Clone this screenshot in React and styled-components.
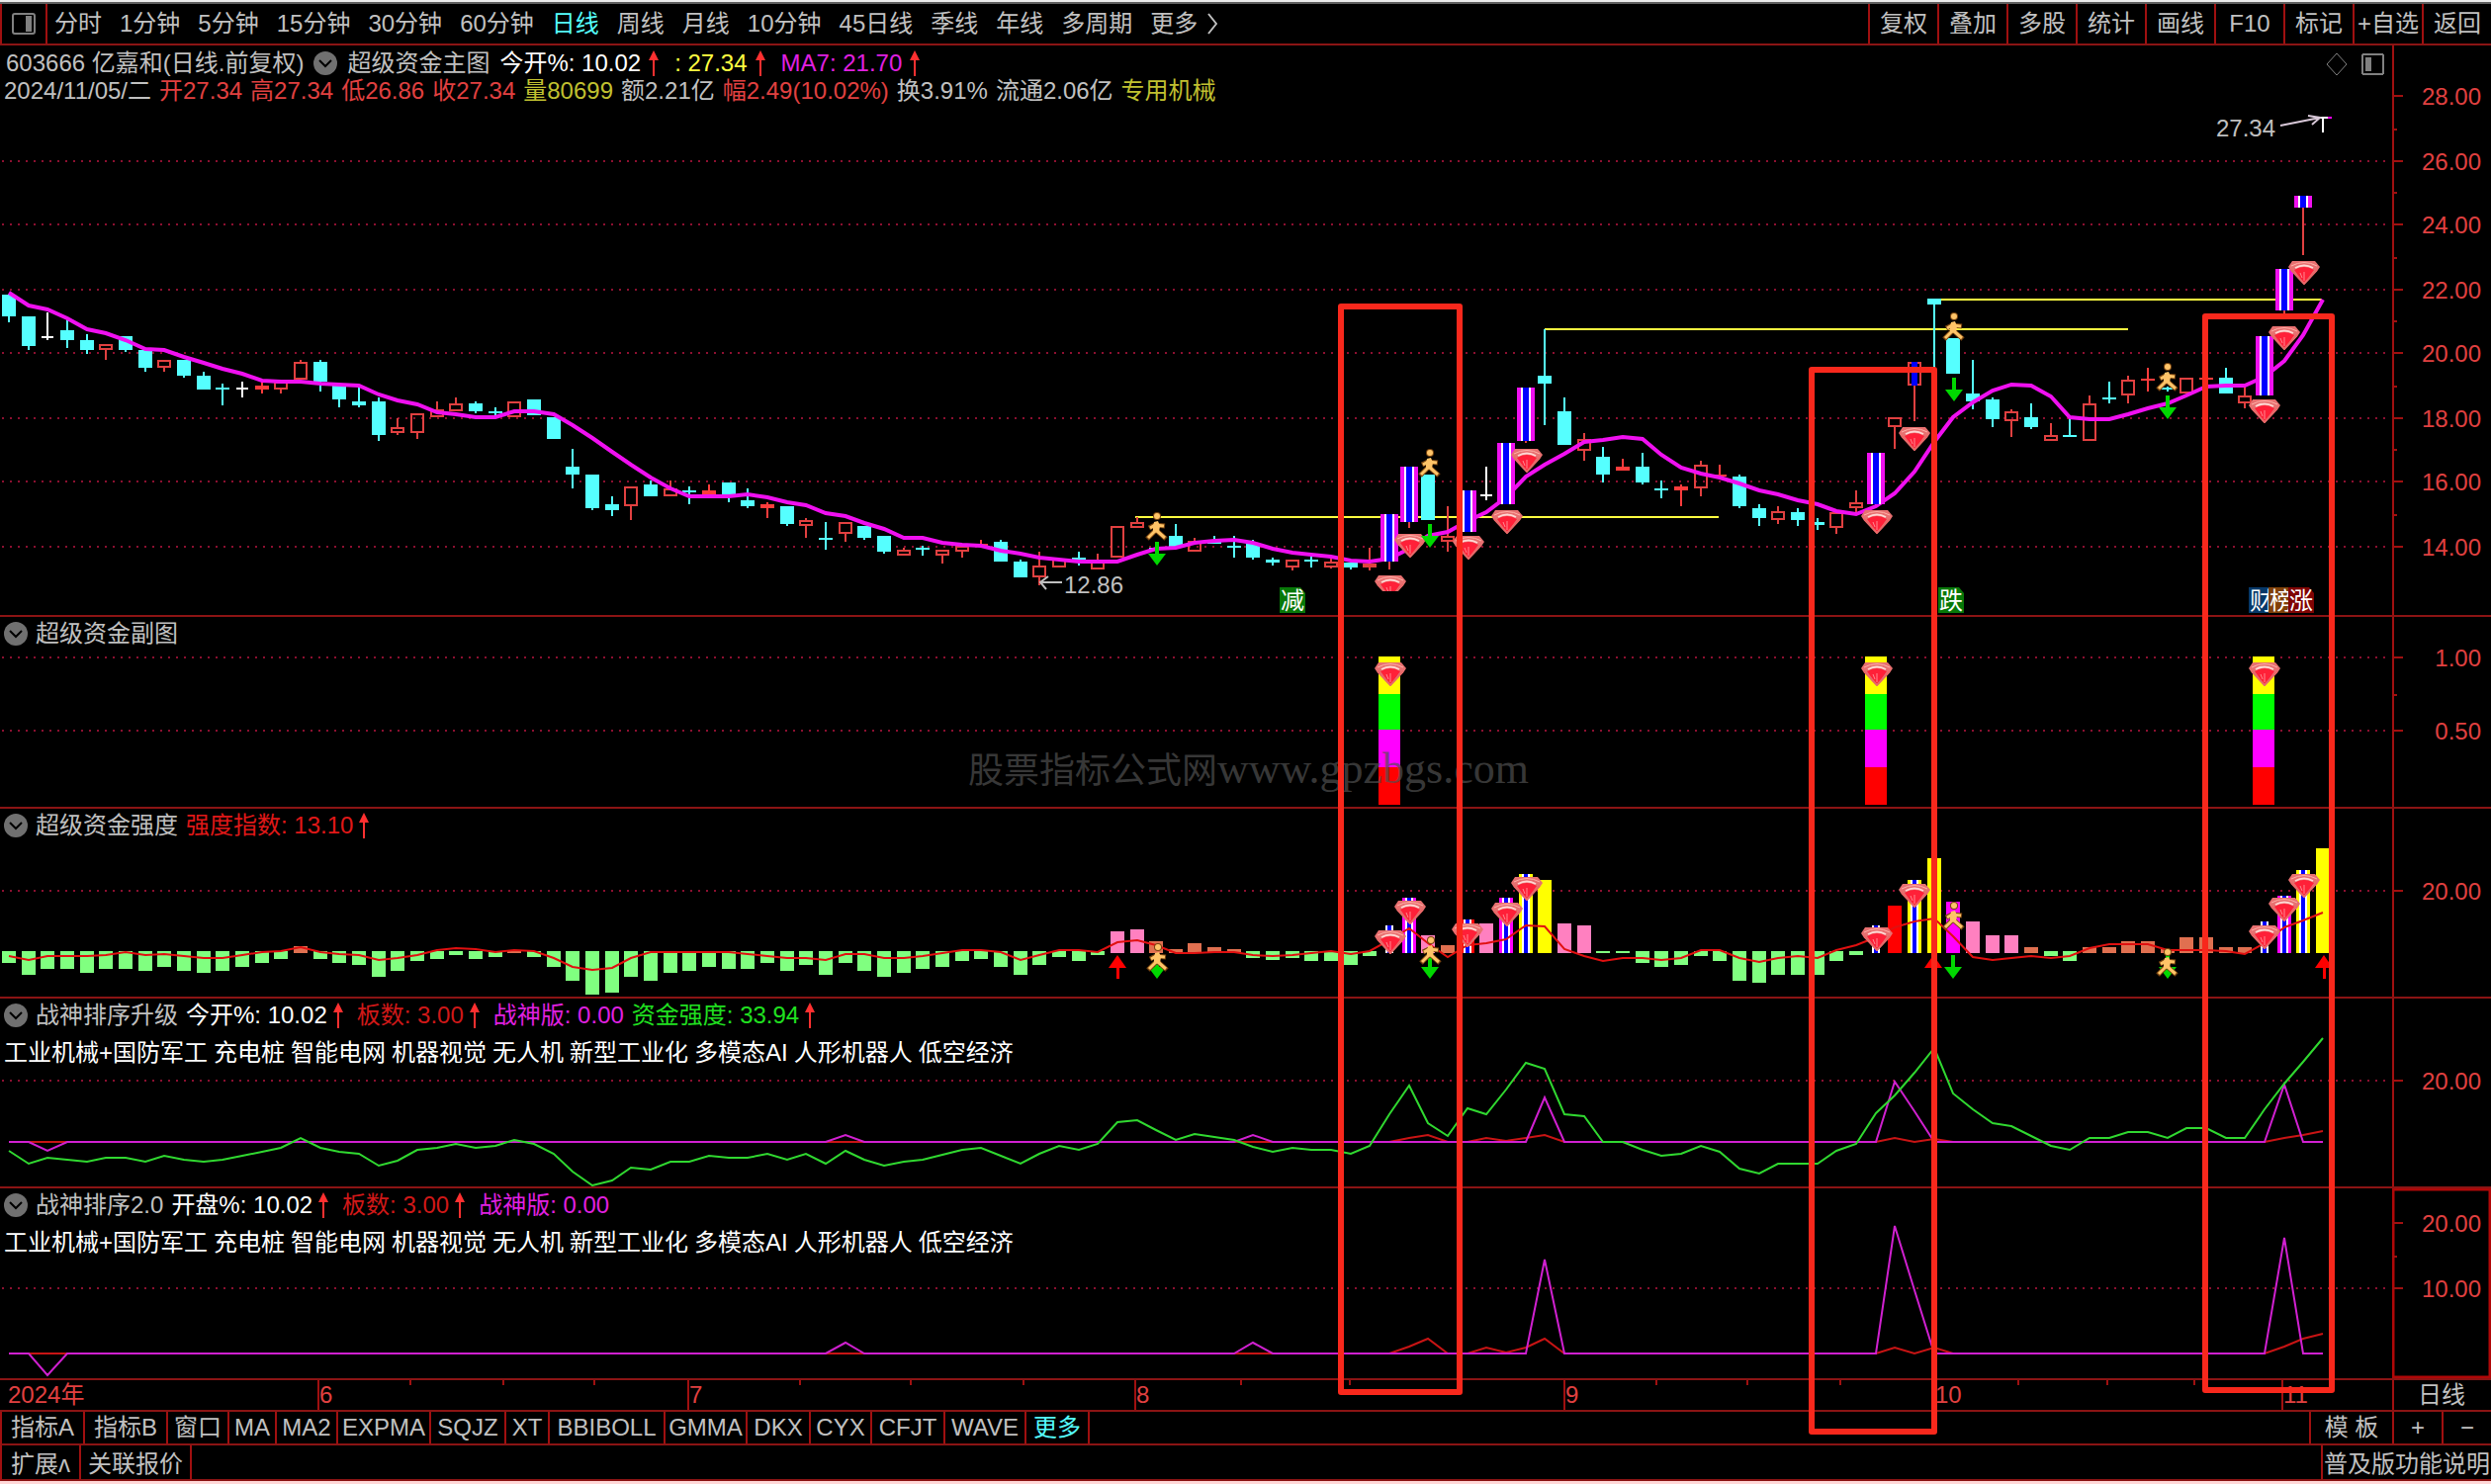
import React from "react";
import styled, { createGlobalStyle, css } from "styled-components";

const GlobalStyle = createGlobalStyle`
  * {
    box-sizing: border-box;
  }
  body {
    margin: 0;
    background: #000;
    font-family: "Liberation Sans", "Noto Sans CJK SC", sans-serif;
    font-size: 24px;
    line-height: 28px;
    color: #c0c0c0;
  }
  button {
    font: inherit;
    color: inherit;
    background: none;
    border: none;
    padding: 0;
    cursor: pointer;
    white-space: nowrap;
  }
`;

const RED = "#e04040";
const LINE = "#8b1414";
const MAGENTA = "#f010f0";
const CYAN = "#55ffff";

/* ---------- data ---------- */

const periods = [
  "分时", "1分钟", "5分钟", "15分钟", "30分钟", "60分钟", "日线", "周线",
  "月线", "10分钟", "45日线", "季线", "年线", "多周期", "更多",
];
const tools = ["复权", "叠加", "多股", "统计", "画线", "F10", "标记", "+自选", "返回"];

const quote = [
  ["2024/11/05/二", "#c0c0c0"],
  ["开27.34", RED],
  ["高27.34", RED],
  ["低26.86", RED],
  ["收27.34", RED],
  ["量80699", "#c0c030"],
  ["额2.21亿", "#c0c0c0"],
  ["幅2.49(10.02%)", RED],
  ["换3.91%", "#c0c0c0"],
  ["流通2.06亿", "#c0c0c0"],
  ["专用机械", "#c0c030"],
];

const concepts = [
  "工业机械+国防军工", "充电桩", "智能电网", "机器视觉", "无人机",
  "新型工业化", "多模态AI", "人形机器人", "低空经济",
];

const indicatorTabs = [
  ["指标A", 84], ["指标B", 84], ["窗口", 62], ["MA", 48], ["MA2", 62], ["EXPMA", 94],
  ["SQJZ", 76], ["XT", 44], ["BBIBOLL", 117], ["GMMA", 83], ["DKX", 64], ["CYX", 62],
  ["CFJT", 74], ["WAVE", 82], ["更多", 64],
];

// [kind, high, bodyTop, bodyBottom, low]
// C falling, R rising, F rising solid, W flat, S limit-up stripes, B blue core
const candles = [
  ["C", 298, 298, 320, 326], ["C", 320, 320, 350, 354], ["W", 316, 340, 342, 344],
  ["C", 323, 334, 344, 352], ["C", 338, 344, 354, 358], ["R", 348, 348, 354, 364],
  ["C", 340, 340, 354, 356], ["C", 354, 354, 372, 376], ["R", 364, 364, 372, 376],
  ["C", 364, 364, 380, 382], ["C", 376, 380, 394, 394], ["C", 388, 392, 394, 410],
  ["W", 386, 392, 394, 402], ["F", 386, 390, 394, 398], ["R", 386, 386, 394, 398],
  ["R", 364, 366, 384, 384], ["C", 364, 366, 386, 396], ["C", 390, 390, 404, 412],
  ["C", 392, 406, 410, 412], ["C", 402, 406, 440, 446], ["R", 423, 432, 438, 440],
  ["R", 418, 418, 438, 444], ["R", 406, 414, 422, 422], ["R", 402, 408, 416, 416],
  ["C", 406, 408, 416, 418], ["C", 412, 416, 418, 420], ["R", 406, 406, 422, 422],
  ["C", 404, 404, 420, 420], ["C", 422, 422, 444, 444], ["C", 454, 472, 480, 494],
  ["C", 480, 480, 514, 516], ["C", 502, 510, 516, 522], ["R", 492, 492, 512, 526],
  ["C", 486, 490, 502, 502], ["R", 486, 494, 502, 502], ["C", 492, 496, 498, 510],
  ["F", 490, 496, 502, 502], ["C", 488, 488, 502, 508], ["C", 494, 506, 512, 514],
  ["F", 508, 510, 514, 524], ["C", 512, 512, 530, 532], ["R", 524, 526, 532, 544],
  ["C", 528, 544, 546, 556], ["R", 528, 528, 540, 548], ["C", 532, 532, 544, 546],
  ["C", 542, 542, 558, 560], ["R", 554, 556, 562, 562], ["C", 552, 554, 556, 562],
  ["R", 556, 556, 562, 570], ["R", 552, 552, 558, 564], ["F", 546, 550, 552, 553],
  ["C", 546, 548, 568, 568], ["C", 566, 568, 584, 584], ["R", 558, 572, 584, 592],
  ["R", 565, 565, 574, 574], ["C", 558, 564, 566, 572], ["R", 560, 568, 576, 576],
  ["R", 532, 532, 564, 564], ["R", 523, 528, 534, 534], ["C", 554, 554, 556, 556],
  ["C", 530, 542, 554, 554], ["R", 544, 547, 558, 558], ["C", 542, 546, 550, 550],
  ["C", 542, 552, 554, 564], ["C", 546, 550, 564, 566],
  ["C", 564, 566, 569, 572], ["R", 566, 566, 574, 577], ["C", 563, 566, 568, 574],
  ["R", 565, 568, 574, 575], ["C", 569, 569, 574, 576], ["R", 554, 570, 574, 577],
  ["S", 520, 520, 568, 576], ["S", 472, 472, 528, 534], ["C", 480, 480, 526, 526],
  ["R", 512, 542, 548, 558], ["S", 496, 496, 538, 538], ["W", 472, 500, 502, 506],
  ["S", 448, 448, 510, 510], ["S", 392, 392, 446, 448], ["C", 333, 380, 388, 430],
  ["C", 402, 416, 450, 450], ["R", 438, 444, 456, 466], ["C", 452, 462, 480, 488],
  ["F", 464, 472, 476, 476], ["C", 458, 472, 488, 490], ["C", 486, 494, 496, 504],
  ["F", 490, 492, 496, 512], ["R", 466, 470, 494, 502], ["F", 470, 480, 482, 484],
  ["C", 480, 482, 512, 514], ["C", 510, 514, 524, 532], ["R", 512, 517, 526, 530],
  ["C", 514, 518, 526, 532], ["C", 524, 528, 531, 536], ["R", 518, 518, 534, 540],
  ["R", 496, 508, 514, 518], ["S", 458, 458, 510, 510], ["R", 422, 422, 432, 454],
  ["B", 366, 366, 390, 426], ["C", 302, 302, 308, 375], ["C", 342, 342, 378, 378],
  ["C", 364, 398, 406, 414], ["C", 402, 404, 424, 432], ["R", 414, 416, 426, 442],
  ["C", 408, 422, 432, 434], ["R", 428, 440, 446, 446], ["C", 424, 440, 442, 442],
  ["R", 400, 408, 446, 446], ["C", 386, 402, 404, 408], ["R", 380, 384, 400, 408],
  ["F", 372, 383, 385, 396], ["C", 391, 392, 394, 396], ["R", 382, 382, 398, 398],
  ["F", 382, 382, 384, 384], ["C", 372, 382, 398, 398], ["R", 391, 400, 408, 413],
  ["S", 340, 340, 400, 400], ["S", 272, 272, 314, 323], ["S", 198, 198, 210, 258],
  ["W", 118, 118, 120, 134],
];

const ma7 = [
  296, 309, 313, 322, 333, 337, 344, 353, 354, 361, 367, 373, 378, 385, 386, 386, 388, 389, 390,
  399, 405, 409, 417, 419, 422, 422, 416, 416, 419, 430, 443, 457, 470, 483, 494, 502, 502, 502,
  500, 503, 508, 511, 519, 522, 529, 535, 544, 544, 549, 551, 552, 557, 560, 564, 566, 568, 568,
  568, 561, 555, 554, 549, 547, 546, 549, 555, 559, 561, 563, 567, 568, 565, 555, 542, 538, 527,
  518, 503, 482, 470, 459, 447, 445, 442, 444, 460, 473, 479, 483, 489, 496, 500, 506, 510, 517,
  520, 512, 499, 477, 447, 422, 407, 395, 389, 390, 401, 422, 424, 424, 419, 413, 408, 400, 391,
  390, 390, 381, 365, 339, 303,
];

// top or bottom edge of each strength bar
const strength = [
  974, 986, 980, 980, 984, 980, 980, 982, 978, 982, 984, 982, 978, 974, 970, "o957", 970, 974,
  976, 988, 982, 972, 970, 966, 970, 968, "o962", 968, 978, 992, 1006, 1004, 988, 992, 984, 982,
  978, 980, 980, 974, 982, 976, 986, 974, 982, 988, 984, 980, 978, 972, 970, 978, 986, 976, 968,
  972, 966, "p942", "p940", "o952", "o960", "o954", "o958", "o960", 969, 971, 969, 972, 972, 976,
  967, "b936", "m908", "p946", "o956", "n930", "p934", "m908", "z884", "y890", "p934", "p936",
  964, 964, 974, 978, 976, 967, 972, 992, 994, 986, 986, 986, 972, 966, "b936", "r916", "z890",
  "y868", "v912", "p932", "p946", "p946", "o958", 967, 972, "o958", "o958", "o952", "o952",
  "o960", "o948", "o948", "o958", "o958", "b932", "m906", "z880", "y858",
];

const strengthMa = [
  967, 971, 967, 967, 967, 966, 963, 966, 965, 967, 969, 969, 966, 963, 962, 958, 963, 965, 966,
  971, 969, 966, 961, 959, 960, 963, 961, 962, 969, 978, 981, 979, 969, 963, 963, 963, 963, 963,
  965, 967, 969, 969, 971, 965, 965, 969, 969, 967, 964, 961, 961, 963, 971, 966, 961, 961, 963,
  953, 951, 956, 964, 964, 963, 963, 966, 967, 966, 964, 962, 965, 962, 951, 939, 954, 968, 956,
  954, 950, 936, 937, 960, 967, 972, 969, 969, 971, 969, 961, 961, 969, 973, 969, 967, 969, 961,
  956, 948, 938, 932, 929, 947, 968, 971, 969, 967, 969, 967, 959, 955, 955, 955, 961, 961, 961,
  962, 965, 954, 938, 931, 923,
];

const fund = [
  1164, 1177, 1171, 1173, 1175, 1171, 1171, 1175, 1169, 1173, 1175, 1173, 1169, 1165, 1161, 1151,
  1161, 1165, 1167, 1179, 1174, 1163, 1161, 1157, 1161, 1159, 1153, 1157, 1167, 1185, 1199, 1194,
  1181, 1183, 1175, 1175, 1169, 1171, 1171, 1167, 1173, 1167, 1177, 1164, 1173, 1179, 1175, 1173,
  1168, 1163, 1161, 1169, 1177, 1167, 1159, 1163, 1157, 1135, 1133, 1143, 1153, 1147, 1150, 1153,
  1160, 1165, 1161, 1163, 1163, 1167, 1159, 1127, 1098, 1136, 1149, 1121, 1127, 1102, 1075, 1081,
  1127, 1129, 1155, 1155, 1163, 1169, 1167, 1159, 1165, 1182, 1187, 1177, 1177, 1177, 1164, 1157,
  1126, 1108, 1085, 1060, 1106, 1122, 1136, 1139, 1149, 1159, 1163, 1151, 1151, 1145, 1145, 1151,
  1141, 1141, 1151, 1151, 1122, 1096, 1074, 1050,
];

const spikes4 = { 2: 1164, 43: 1148, 64: 1148, 79: 1110, 97: 1094, 98: 1124, 117: 1097 };
const boards4 = { 72: 1151, 73: 1148, 76: 1151, 77: 1154, 78: 1151, 79: 1148, 97: 1151, 99: 1152, 117: 1151, 118: 1148, 119: 1144 };
const spikes5 = { 2: 1391, 43: 1358, 64: 1358, 79: 1274, 97: 1240, 98: 1305, 117: 1252 };
const boards5 = { 72: 1362, 73: 1354, 76: 1363, 77: 1368, 78: 1363, 79: 1354, 97: 1363, 99: 1363, 117: 1362, 118: 1354, 119: 1349 };

const months = [
  { label: "2024年", span: 321 },
  { label: "6", span: 374 },
  { label: "7", span: 452 },
  { label: "8", span: 434 },
  { label: "9", span: 374 },
  { label: "10", span: 352 },
  { label: "11", span: 112 },
];
const weekTicks = [415, 509, 601, 809, 921, 1035, 1255, 1365, 1675, 1767, 1861, 2041, 2131, 2219];

/* ---------- chart helpers ---------- */

const xAt = (i) => Math.round(9 + (i * 2340) / 119);
const toPoints = (values) => values.map((v, i) => `${xAt(i)},${v}`).join(" ");
const withBase = (base, peaks) =>
  Array.from({ length: 120 }, (_, i) => (i in peaks ? peaks[i] : base));

const Stripes = ({ x, top, bottom, outer = MAGENTA, width = 18, side = 4 }) => {
  const h = bottom - top;
  const inner = width - side * 2;
  return (
    <>
      <rect x={x - width / 2} y={top} width={width} height={h} fill={outer} />
      <rect x={x - inner / 2} y={top} width={inner} height={h} fill="#fff" />
      <rect x={x - inner / 2 + 2} y={top} width={inner - 4} height={h} fill="#0000ff" />
    </>
  );
};

const Candle = ({ kind, x, high, top, bottom, low }) => {
  const h = bottom - top;
  const color = kind === "C" ? CYAN : kind === "W" ? "#fff" : kind === "F" ? "#ff3c3c" : RED;
  const hollow = kind === "R" || kind === "B";
  return (
    <>
      {high < top && <rect x={x - 1} y={high} width="2" height={top - high} fill={color} />}
      {low > bottom && <rect x={x - 1} y={bottom} width="2" height={low - bottom} fill={color} />}
      {kind === "S" && <Stripes x={x} top={top} bottom={bottom} />}
      {hollow && (
        <rect x={x - 6} y={top + 1} width="12" height={h - 2} fill="none" stroke={color} strokeWidth="2" />
      )}
      {kind === "B" && <rect x={x - 3} y={top} width="6" height={h} fill="#0000ff" />}
      {"CFW".includes(kind) && (
        <rect x={x - (kind === "W" ? 6 : 7)} y={top} width={kind === "W" ? 12 : 14} height={h} fill={color} />
      )}
    </>
  );
};

const Gem = ({ x, y, clip }) => (
  <svg x={x - 15} y={y} width="32" height={clip || 24} viewBox={`0 0 32 ${clip || 24}`}>
    <path d="M4 0H27L32 6L30 9L16 24L2 9L0 6Z" fill="#e87070" />
    <path d="M3 5Q16 -2 29 5" fill="none" stroke="#ffb0a8" strokeWidth="1" />
    <path d="M6 9Q16 3 26 9L16 23Z" fill="#ff2038" />
    <path d="M7 7Q16 2 25 7" fill="none" stroke="#ffd8d4" strokeWidth="2" />
    <path d="M3 9L16 23L29 9" fill="none" stroke="#e86868" strokeWidth="2" />
    <path d="M16 11V20M12 12L14 17" stroke="#ff8890" strokeWidth="1" />
  </svg>
);

const Runner = ({ x, y }) => (
  <svg x={x - 11} y={y} width="24" height="30" viewBox="0 0 24 30">
    <path
      d="M10 19L2 27M12 19L21 27M4 16L10 13L20 14"
      fill="none"
      stroke="#7a4510"
      strokeWidth="5"
    />
    <circle cx="12" cy="4" r="4" fill="#7a4510" />
    <circle cx="12" cy="4" r="3" fill="#ffc468" />
    <path d="M9 10L13 9L15 14L14 20L8 21L8 15Z" fill="#ffc468" />
    <path
      d="M10 19L3 26M12 19L20 26M5 16L10 13L19 14"
      fill="none"
      stroke="#ffc468"
      strokeWidth="3"
    />
  </svg>
);

const DownArrow = ({ x, y, h = 24 }) => (
  <g fill="#00d800">
    <rect x={x - 2} y={y} width="4" height={h - 10} />
    <path d={`M${x - 9} ${y + h - 12}H${x + 9}L${x} ${y + h}Z`} />
  </g>
);

const UpArrow = ({ x, y }) => (
  <g fill="#ff0000">
    <rect x={x - 1} y={y + 10} width="3" height="14" />
    <path d={`M${x - 9} ${y + 13}H${x + 9}L${x} ${y}Z`} />
  </g>
);

const Grid = ({ rows }) =>
  rows.map((y) => (
    <line key={y} x1="2" x2="2416" y1={y} y2={y} stroke="#8c1030" strokeWidth="2" strokeDasharray="2 6" />
  ));

const Plot = ({ top, height, children }) => (
  <PlotSvg viewBox={`0 ${top} 2419 ${height}`} preserveAspectRatio="none" $height={height}>
    {children}
  </PlotSvg>
);

const Axis = ({ top, height, labels, minor = [], framed }) => (
  <AxisSvg viewBox={`0 ${top} 100 ${height}`} preserveAspectRatio="xMaxYMin slice" $height={height}>
    <rect x="0" y={top} width="2" height={height} fill="#a01010" />
    {framed && (
      <rect x="1" y={top + 1} width="98" height={height - 2} fill="none" stroke="#b00808" strokeWidth="3" />
    )}
    {labels.map(([y, text]) => (
      <g key={text}>
        <rect x="0" y={y - 1} width="11" height="2" fill="#a01010" />
        <text x="90" y={y + 9} textAnchor="end" fill={RED}>
          {text}
        </text>
      </g>
    ))}
    {minor.map((y) => (
      <rect key={y} x="0" y={y - 1} width="5" height="2" fill="#a01010" />
    ))}
  </AxisSvg>
);

const Badge = ({ x, fill, children }) => (
  <g>
    <path d={`M${x} 594H${x + 21}L${x + 26} 600V620H${x}Z`} fill={fill} />
    <text x={x + 1} y="616" fill="#fff">
      {children}
    </text>
  </g>
);

const Rise = () => (
  <RiseIcon width="10" height="26" viewBox="0 0 10 26" aria-hidden="true">
    <path d="M5 0L10 10H0Z" fill="#ff3030" />
    <path d="M5 6V26" stroke="#ff3030" strokeWidth="2" />
  </RiseIcon>
);

const Toggle = ({ label }) => (
  <ToggleButton aria-label={label}>
    <svg width="24" height="24" viewBox="0 0 24 24">
      <circle cx="12" cy="12" r="12" fill="#707070" />
      <path d="M6 9L12 15L18 9" fill="none" stroke="#000" strokeWidth="2" />
    </svg>
  </ToggleButton>
);

const Value = ({ color, rise, children }) => (
  <>
    <Item $color={color}>{children}</Item>
    {rise && <Rise />}
  </>
);

const Concepts = () => (
  <LegendRow $gap={6}>
    {concepts.map((c) => (
      <Item key={c} $color="#fff">{c}</Item>
    ))}
  </LegendRow>
);

const barColors = { o: "#e07050", p: "#ff80c0", r: "#ff0000", y: "#ffff00", v: "#ff00ff" };
const stripeColors = { b: "#000", n: "#ff0000", m: "#ff00ff", z: "#ffff00" };

const StrengthBar = ({ x, value }) => {
  if (typeof value === "number") {
    return <rect x={x - 7} y="962" width="14" height={value - 962} fill="#80ff80" />;
  }
  const kind = value[0];
  const top = Number(value.slice(1));
  if (stripeColors[kind]) {
    return <Stripes x={x} top={top} bottom={964} outer={stripeColors[kind]} width={14} side={3} />;
  }
  return <rect x={x - 7} y={top} width="14" height={964 - top} fill={barColors[kind]} />;
};

/* ---------- page ---------- */

export default function App() {
  return (
    <>
      <GlobalStyle />
      <Screen>
        <WindowEdge />
        <Toolbar>
          <SideButton aria-label="侧栏">
            <svg width="24" height="22" viewBox="0 0 24 22">
              <rect x="1" y="1" width="22" height="20" rx="2" fill="none" stroke="#808080" strokeWidth="2" />
              <rect x="14" y="3" width="6" height="16" fill="#808080" />
            </svg>
          </SideButton>
          <Periods>
            {periods.map((p) => (
              <PeriodButton key={p} $active={p === "日线"}>
                {p}
              </PeriodButton>
            ))}
            <svg width="10" height="22" viewBox="0 0 10 22">
              <path d="M1 1L9 11L1 21" fill="none" stroke="#c0c0c0" strokeWidth="2" />
            </svg>
          </Periods>
          <Tools>
            {tools.map((t) => (
              <ToolButton key={t}>{t}</ToolButton>
            ))}
          </Tools>
        </Toolbar>

        <Pane>
          <Plot top={46} height={576}>
            <Grid rows={[163, 227, 293, 357, 423, 487, 553]} />
            <g fill="#ffff40">
              <rect x="1148" y="522" width="590" height="2" />
              <rect x="1562" y="332" width="590" height="2" />
              <rect x="1955" y="302" width="393" height="2" />
            </g>
            {candles.map(([kind, high, top, bottom, low], i) =>
              kind === "S" ? null : (
                <Candle key={i} kind={kind} x={xAt(i)} high={high} top={top} bottom={bottom} low={low} />
              )
            )}
            <polyline points={toPoints(ma7)} fill="none" stroke={MAGENTA} strokeWidth="4" />
            {candles.map(([kind, high, top, bottom, low], i) =>
              kind === "S" ? (
                <Candle key={i} kind={kind} x={xAt(i)} high={high} top={top} bottom={bottom} low={low} />
              ) : null
            )}
            <Gem x={1405} y={582} clip={16} />
            <Gem x={1425} y={540} />
            <Gem x={1484} y={542} />
            <Gem x={1523} y={516} />
            <Gem x={1543} y={454} />
            <Gem x={1897} y={516} />
            <Gem x={1935} y={432} />
            <Gem x={2289} y={404} />
            <Gem x={2309} y={330} />
            <Gem x={2329} y={264} />
            <Runner x={1169} y={518} />
            <Runner x={1445} y={454} />
            <Runner x={1975} y={316} />
            <Runner x={2191} y={367} />
            <DownArrow x={1170} y={548} />
            <DownArrow x={1446} y={530} />
            <DownArrow x={1976} y={382} />
            <DownArrow x={2192} y={400} />
            <path d="M1074 589H1053M1060 583L1052 589L1058 596" fill="none" stroke="#c0c0c0" strokeWidth="2" />
            <text x="1076" y="600" fill="#c0c0c0">12.86</text>
            <path d="M2306 127L2346 119M2334 117L2346 119L2338 126" fill="none" stroke="#d8c8d8" strokeWidth="2" />
            <rect x="2354" y="118" width="4" height="2" fill="#ff00ff" />
            <text x="2241" y="138" fill="#c0c0c0">27.34</text>
            <Badge x={1294} fill="#087808">减</Badge>
            <Badge x={1960} fill="#087808">跌</Badge>
            <Badge x={2274} fill="#063868">财</Badge>
            <Badge x={2294} fill="#804008">榜</Badge>
            <Badge x={2314} fill="#800404">涨</Badge>
            <path d="M2363 54L2373 65L2363 76L2353 65Z" fill="none" stroke="#808080" strokeWidth="1" />
            <rect x="2389" y="55" width="21" height="20" rx="2" fill="none" stroke="#808080" strokeWidth="2" />
            <rect x="2392" y="58" width="6" height="14" fill="#808080" />
          </Plot>
          <Legend $main>
            <LegendRow $inset={6} $gap={10} $short>
              <Item>603666 亿嘉和(日线.前复权)</Item>
              <Toggle label="主图指标" />
              <Item>超级资金主图</Item>
              <Value color="#fff" rise>今开%: 10.02</Value>
              <Value color="#ffff40" rise>: 27.34</Value>
              <Value color="#e020e0" rise>MA7: 21.70</Value>
            </LegendRow>
            <LegendRow $short>
              {quote.map(([text, color]) => (
                <Item key={text} $color={color}>{text}</Item>
              ))}
            </LegendRow>
          </Legend>
          <Axis
            top={46}
            height={576}
            labels={[
              [97, "28.00"], [163, "26.00"], [227, "24.00"], [293, "22.00"],
              [357, "20.00"], [423, "18.00"], [487, "16.00"], [553, "14.00"],
            ]}
            minor={[131, 195, 261, 325, 391, 455, 521]}
          />
        </Pane>

        <Pane>
          <Plot top={624} height={192}>
            <Grid rows={[665, 739]} />
            {[1405, 1897, 2289].map((x) => (
              <g key={x}>
                <rect x={x - 11} y="664" width="22" height="38" fill="#ffff00" />
                <rect x={x - 11} y="702" width="22" height="36" fill="#00ff00" />
                <rect x={x - 11} y="738" width="22" height="38" fill="#ff00ff" />
                <rect x={x - 11} y="776" width="22" height="38" fill="#ff0000" />
                <Gem x={x} y={670} />
              </g>
            ))}
            <Watermark x="979" y="792">
              股票指标公式网<tspan fontSize="44">www.gpzbgs.com</tspan>
            </Watermark>
          </Plot>
          <Legend>
            <LegendRow>
              <Toggle label="超级资金副图" />
              <Item>超级资金副图</Item>
            </LegendRow>
          </Legend>
          <Axis top={624} height={192} labels={[[665, "1.00"], [739, "0.50"]]} minor={[703]} />
        </Pane>

        <Pane>
          <Plot top={818} height={190}>
            <Grid rows={[901]} />
            {strength.map((value, i) => (
              <StrengthBar key={i} x={xAt(i)} value={value} />
            ))}
            <polyline points={toPoints(strengthMa)} fill="none" stroke="#e01010" strokeWidth="2" />
            <Gem x={1405} y={941} />
            <Gem x={1425} y={911} />
            <Gem x={1483} y={934} />
            <Gem x={1523} y={913} />
            <Gem x={1543} y={887} />
            <Gem x={1897} y={938} />
            <Gem x={1935} y={894} />
            <Gem x={2289} y={936} />
            <Gem x={2309} y={908} />
            <Gem x={2329} y={884} />
            <UpArrow x={1130} y={966} />
            <UpArrow x={1955} y={966} />
            <UpArrow x={2350} y={966} />
            <DownArrow x={1170} y={966} />
            <DownArrow x={1446} y={966} />
            <DownArrow x={1975} y={966} />
            <DownArrow x={2192} y={966} />
            <Runner x={1170} y={954} />
            <Runner x={1446} y={947} />
            <Runner x={1975} y={912} />
            <Runner x={2191} y={959} />
          </Plot>
          <Legend>
            <LegendRow>
              <Toggle label="超级资金强度" />
              <Item>超级资金强度</Item>
              <Value color="#e01818" rise>强度指数: 13.10</Value>
            </LegendRow>
          </Legend>
          <Axis top={818} height={190} labels={[[901, "20.00"]]} />
        </Pane>

        <Pane>
          <Plot top={1010} height={190}>
            <Grid rows={[1093]} />
            <polyline points={toPoints(withBase(1155, boards4))} fill="none" stroke="#c81414" strokeWidth="2" />
            <polyline points={toPoints(withBase(1155, spikes4))} fill="none" stroke="#d020d0" strokeWidth="2" />
            <polyline points={toPoints(fund)} fill="none" stroke="#30d830" strokeWidth="2" />
          </Plot>
          <Legend>
            <LegendRow>
              <Toggle label="战神排序升级" />
              <Item>战神排序升级</Item>
              <Value color="#fff" rise>今开%: 10.02</Value>
              <Value color="#d01818" rise>板数: 3.00</Value>
              <Value color="#e020e0">战神版: 0.00</Value>
              <Value color="#20e020" rise>资金强度: 33.94</Value>
            </LegendRow>
            <Concepts />
          </Legend>
          <Axis top={1010} height={190} labels={[[1093, "20.00"]]} />
        </Pane>

        <Pane>
          <Plot top={1202} height={192}>
            <Grid rows={[1303]} />
            <polyline points={toPoints(withBase(1369, boards5))} fill="none" stroke="#c81414" strokeWidth="2" />
            <polyline points={toPoints(withBase(1369, spikes5))} fill="none" stroke="#d020d0" strokeWidth="2" />
          </Plot>
          <Legend>
            <LegendRow>
              <Toggle label="战神排序2.0" />
              <Item>战神排序2.0</Item>
              <Value color="#fff" rise>开盘%: 10.02</Value>
              <Value color="#d01818" rise>板数: 3.00</Value>
              <Value color="#e020e0">战神版: 0.00</Value>
            </LegendRow>
            <Concepts />
          </Legend>
          <Axis top={1202} height={192} labels={[[1237, "20.00"], [1303, "10.00"]]} minor={[1271]} framed />
        </Pane>

        <TimeAxis>
          <WeekTicks viewBox="0 0 2419 30" preserveAspectRatio="none">
            {weekTicks.map((x) => (
              <rect key={x} x={x - 1} y="0" width="2" height="5" fill="#a01010" />
            ))}
          </WeekTicks>
          <Months>
            {months.map((m, i) => (
              <Month key={m.label} $first={i === 0}>
                {m.label}
              </Month>
            ))}
          </Months>
          <PeriodName>日线</PeriodName>
        </TimeAxis>

        <BottomBar $height={34}>
          {indicatorTabs.map(([name, width]) => (
            <Tab key={name} $width={width} $active={name === "更多"}>
              {name}
            </Tab>
          ))}
          <Spacer />
          <EndTab $width={84}>模 板</EndTab>
          <EndTab $width={50}>+</EndTab>
          <EndTab $width={50}>−</EndTab>
        </BottomBar>
        <BottomBar $height={36} $low>
          <Tab $width={80}>扩展ʌ</Tab>
          <Tab $width={112}>关联报价</Tab>
          <Spacer />
          <EndTab $width={172}>普及版功能说明</EndTab>
        </BottomBar>

        <Marks viewBox="0 0 2519 1498" preserveAspectRatio="none">
          <rect x="1356" y="310" width="120" height="1098" />
          <rect x="1832" y="374" width="124" height="1074" />
          <rect x="2230" y="320" width="128" height="1086" />
        </Marks>
      </Screen>
    </>
  );
}

/* ---------- styles ---------- */

const Screen = styled.main`
  position: relative;
  width: 100%;
  background: #000;
  border-bottom: 3px solid #ffd8d8;
`;

const WindowEdge = styled.div`
  height: 4px;
  background: #606060;
  border-top: 2px solid #ececec;
`;

const Toolbar = styled.header`
  display: flex;
  height: 42px;
  border-bottom: 2px solid ${LINE};
`;

const SideButton = styled.button`
  width: 48px;
  border-left: 2px solid #a01010;
  border-right: 2px solid #a01010;
  svg {
    display: block;
    margin: 0 auto;
  }
`;

const Periods = styled.nav`
  display: flex;
  flex: 1;
  align-items: center;
  gap: 18px;
  padding-left: 7px;
  svg {
    margin-left: -8px;
  }
`;

const PeriodButton = styled.button`
  color: ${({ $active }) => ($active ? CYAN : "#c0c0c0")};
`;

const Tools = styled.div`
  display: flex;
`;

const ToolButton = styled.button`
  width: 70px;
  border-left: 2px solid #a01010;
`;

const Pane = styled.section`
  display: grid;
  grid-template-columns: minmax(0, 1fr) 100px;
  border-bottom: 2px solid ${LINE};
`;

const svgBase = css`
  display: block;
  width: 100%;
  height: ${({ $height }) => $height}px;
  grid-row: 1;
  font-size: 24px;
`;

const PlotSvg = styled.svg`
  ${svgBase}
  grid-column: 1;
  rect,
  line {
    shape-rendering: crispEdges;
  }
`;

const AxisSvg = styled.svg`
  ${svgBase}
  grid-column: 2;
`;

const Watermark = styled.text`
  font-family: "Liberation Serif", "Noto Sans CJK SC", serif;
  font-size: 36px;
  fill: #505050;
  fill-opacity: 0.7;
`;

const Legend = styled.div`
  grid-row: 1;
  grid-column: 1;
  z-index: 1;
  align-self: start;
  display: flex;
  flex-direction: column;
  gap: ${({ $main }) => ($main ? 0 : 4)}px;
  padding-top: ${({ $main }) => ($main ? 4 : 0)}px;
`;

const LegendRow = styled.div`
  display: flex;
  align-items: center;
  gap: ${({ $gap = 8 }) => $gap}px;
  height: ${({ $short }) => ($short ? 28 : 34)}px;
  padding-left: ${({ $inset = 4 }) => $inset}px;
`;

const Item = styled.span`
  color: ${({ $color }) => $color || "#c0c0c0"};
  white-space: nowrap;
`;

const RiseIcon = styled.svg`
  margin: 0 6px 0 -2px;
`;

const ToggleButton = styled.button`
  width: 24px;
  height: 24px;
  svg {
    display: block;
  }
`;

const TimeAxis = styled.div`
  display: grid;
  grid-template-columns: minmax(0, 1fr) 100px;
  height: 32px;
  border-bottom: 2px solid ${LINE};
`;

const WeekTicks = styled.svg`
  grid-row: 1;
  grid-column: 1;
  width: 100%;
  height: 30px;
`;

const Months = styled.div`
  grid-row: 1;
  grid-column: 1;
  display: grid;
  grid-template-columns: ${months.map((m) => `${m.span}fr`).join(" ")};
`;

const Month = styled.span`
  border-left: ${({ $first }) => ($first ? "none" : "2px solid #a01010")};
  padding-left: ${({ $first }) => ($first ? 8 : 0)}px;
  line-height: 30px;
  color: ${RED};
`;

const PeriodName = styled.span`
  grid-row: 1;
  grid-column: 2;
  border-left: 2px solid #a01010;
  padding-left: 24px;
  line-height: 30px;
`;

const BottomBar = styled.div`
  display: flex;
  height: ${({ $height }) => $height}px;
  border-left: 2px solid #a01010;
  border-bottom: 2px solid ${LINE};
  button {
    padding-top: ${({ $low }) => ($low ? 4 : 0)}px;
  }
`;

const Tab = styled.button`
  width: ${({ $width }) => $width}px;
  border-right: 2px solid #a01010;
  color: ${({ $active }) => ($active ? CYAN : "#c0c0c0")};
`;

const EndTab = styled.button`
  width: ${({ $width }) => $width}px;
  border-left: 2px solid #a01010;
`;

const Spacer = styled.div`
  flex: 1;
`;

const Marks = styled.svg`
  position: absolute;
  inset: 0;
  z-index: 2;
  width: 100%;
  height: 100%;
  pointer-events: none;
  rect {
    fill: none;
    stroke: #f8281c;
    stroke-width: 6px;
    stroke-linejoin: round;
  }
`;
